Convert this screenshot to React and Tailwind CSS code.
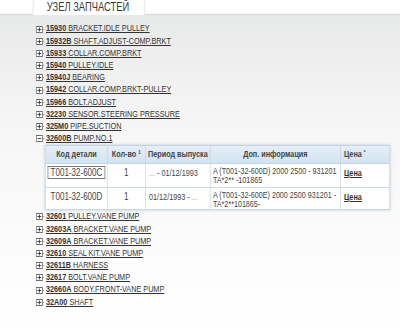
import React from 'react';

// the source page is a squeezed screenshot: lay out at full width, then squeeze horizontally
const font = "font-['Liberation_Sans',Arial,sans-serif]";

const before = [
  ['15930', 'BRACKET.IDLE PULLEY'],
  ['15932B', 'SHAFT.ADJUST-COMP.BRKT'],
  ['15933', 'COLLAR.COMP.BRKT'],
  ['15940', 'PULLEY.IDLE'],
  ['15940J', 'BEARING'],
  ['15942', 'COLLAR.COMP.BRKT-PULLEY'],
  ['15966', 'BOLT.ADJUST'],
  ['32230', 'SENSOR.STEERING PRESSURE'],
  ['325M0', 'PIPE.SUCTION'],
];

const after = [
  ['32601', 'PULLEY.VANE PUMP'],
  ['32603A', 'BRACKET.VANE PUMP'],
  ['32609A', 'BRACKET.VANE PUMP'],
  ['32610', 'SEAL KIT.VANE PUMP'],
  ['32611B', 'HARNESS'],
  ['32617', 'BOLT.VANE PUMP'],
  ['32660A', 'BODY.FRONT-VANE PUMP'],
  ['32A00', 'SHAFT'],
];

const parts = [
  {
    code: 'T001-32-600C',
    qty: '1',
    from: null,
    to: '01/12/1993',
    info: 'A (T001-32-600D) 2000 2500 - 931201 TA*2** -101865',
    selected: true,
    h: 'h-[24px]',
  },
  {
    code: 'T001-32-600D',
    qty: '1',
    from: '01/12/1993',
    to: null,
    info: 'A (T001-32-600E) 2000 2500 931201 - TA*2**101865-',
    h: 'h-[21px]',
  },
];

// boxed plus/minus with a dotted connector, like a tree view
const TreeIcon = ({ open }) => (
  <svg width="12" height="7" viewBox="0 0 12 7" className="shrink-0">
    <rect x="0.5" y="0.5" width="8" height="6" fill="#fff" stroke="#6f6f6f" />
    <line x1="2" y1="3.5" x2="7" y2="3.5" stroke="#333" />
    {!open && <line x1="4.5" y1="1.5" x2="4.5" y2="5.5" stroke="#333" />}
    <line x1="9" y1="3.5" x2="12" y2="3.5" stroke="#888" strokeDasharray="1.3 1.3" />
  </svg>
);

const Item = ({ code, name, open }) => (
  <div className="flex items-center h-[12.2px]">
    <TreeIcon open={open} />
    <a href="#" className="ml-[1px] text-[#333] underline whitespace-nowrap text-[9.3px] leading-none">
      <b>{code}</b> {name}
    </a>
  </div>
);

const Dots = () => <span className="text-[#c8a27c]">...</span>;

const th = 'border border-[#c4d6e5] font-bold whitespace-nowrap';
const td = 'border border-[#cbd9e5] align-top';

export default function App() {
  return (
    <div className="w-[400px] h-[332px] overflow-hidden bg-white">
      <div className={`w-[513px] h-[332px] origin-top-left scale-x-[0.78] ${font}`}>
        {/* tab strip */}
        <div className="flex h-[15px] bg-white">
          <div className="w-[42px] border-b border-[#d6d6d6]" />
          <div className="w-[144px] bg-white border-x border-[#e2e2e2] pl-[17px] pt-[1px] text-[12px] leading-[13px] text-[#3a3a3a] whitespace-nowrap">
            УЗЕЛ ЗАПЧАСТЕЙ
          </div>
          <div className="flex-1 border-b border-[#d6d6d6]" />
        </div>

        <div className="bg-gradient-to-b from-[#e8e9e9] via-[#f6f6f6] via-35% to-white pl-[46px] pt-[8px] pb-[20px]">
          {before.map(([c, n]) => (
            <Item key={c} code={c} name={n} />
          ))}
          <Item code="32600B" name="PUMP.NO.1" open />

          <div className="ml-[12px] mb-[1px] w-[442px] shadow-[0_0_3px_rgba(110,145,180,0.5)]">
            <table className="w-full table-fixed border-collapse border border-[#adc5da] text-[#444] text-[9.3px] leading-[10px]">
              <colgroup>
                <col className="w-[79px]" />
                <col className="w-[49px]" />
                <col className="w-[83px]" />
                <col className="w-[167px]" />
                <col />
              </colgroup>
              <thead>
                <tr className="h-[18px] bg-gradient-to-b from-[#e6f0f8] to-[#d2e3f1] text-[#444]">
                  <th className={`${th} text-center`}>Код детали</th>
                  <th className={`${th} text-center`}>
                    Кол-во <sup className="text-[6px]">1</sup>
                  </th>
                  <th className={`${th} text-center`}>Период выпуска</th>
                  <th className={`${th} text-center`}>Доп. информация</th>
                  <th className={`${th} text-left pl-[4px]`}>
                    Цена <sup className="text-[6px]">*</sup>
                  </th>
                </tr>
              </thead>
              <tbody className="bg-white">
                {parts.map((p) => (
                  <tr key={p.code} className={p.h}>
                    <td className={`${td} pt-[2px] text-center text-[10.3px] leading-[11px]`}>
                      <span
                        className={`inline-block px-[3px] border ${
                          p.selected ? 'border-[#777]' : 'border-transparent'
                        }`}
                      >
                        {p.code}
                      </span>
                    </td>
                    <td className={`${td} pt-[3px] text-center text-[10.3px] leading-[11px]`}>{p.qty}</td>
                    <td className={`${td} pt-[4px] pl-[4px] whitespace-nowrap`}>
                      {p.from ? p.from : <Dots />} - {p.to ? p.to : <Dots />}
                    </td>
                    <td className={`${td} pt-[3px] pl-[3px] text-[9.2px] leading-[9px]`}>{p.info}</td>
                    <td className={`${td} pt-[4px] pl-[4px]`}>
                      <a href="#" className="font-bold underline text-[#333]">
                        Цена
                      </a>
                    </td>
                  </tr>
                ))}
              </tbody>
            </table>
          </div>

          {after.map(([c, n]) => (
            <Item key={c} code={c} name={n} />
          ))}
        </div>
      </div>
    </div>
  );
}
